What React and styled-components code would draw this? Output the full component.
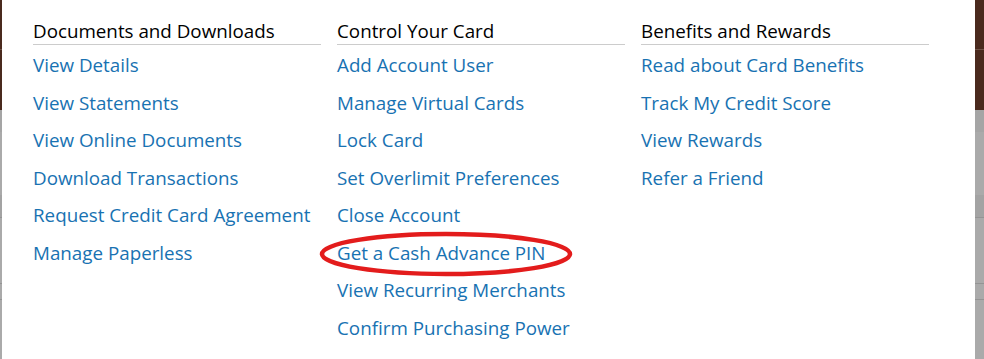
import React from 'react';
import styled, { createGlobalStyle } from 'styled-components';

const GlobalStyle = createGlobalStyle`
  html, body {
    margin: 0;
    padding: 0;
    height: 359px;
    overflow: hidden;
    background: #aaaaaa;
  }
`;

const Page = styled.div`
  position: relative;
  height: 359px;
  overflow: hidden;
  font-family: "Open Sans", "Noto Sans", sans-serif;
`;

const TopBar = styled.div`
  height: 110px;
  background: #4a2a1e;
  border-top: 49px solid #4a2a1e;
  box-sizing: border-box;
  box-shadow: inset 0 1px 0 #6e5247;
`;

const GrayBand = styled.div`
  height: ${(p) => p.h}px;
  background: ${(p) => p.bg || '#aaaaaa'};
  border-bottom: ${(p) => (p.line ? '1px solid #949494' : 'none')};
`;

const Menu = styled.div`
  position: absolute;
  top: 0;
  left: 2px;
  width: 973px;
  height: 400px;
  background: #ffffff;
  display: grid;
  grid-template-columns: repeat(3, 288px);
  column-gap: 16px;
  padding-left: 31px;
  box-sizing: border-box;
  align-content: start;
`;

const Column = styled.section`
  display: flex;
  flex-direction: column;
`;

const Heading = styled.h3`
  margin: 19px 0 2px;
  padding-bottom: 1px;
  border-bottom: 1px solid #cccccc;
  font-size: 18.8px;
  line-height: 24px;
  font-weight: 400;
  color: #000000;
`;

const LinkList = styled.ul`
  list-style: none;
  margin: 0;
  padding: 0;
`;

const Item = styled.li`
  position: relative;
  line-height: 37.5px;
  font-size: 18.8px;
  white-space: nowrap;
`;

const Link = styled.a`
  color: #1872b2;
  text-decoration: none;
`;

const Circle = styled.svg`
  position: absolute;
  left: -17px;
  top: -3px;
  width: 252px;
  height: 44px;
  overflow: visible;
  pointer-events: none;
`;

const columns = [
  {
    title: 'Documents and Downloads',
    links: [
      'View Details',
      'View Statements',
      'View Online Documents',
      'Download Transactions',
      'Request Credit Card Agreement',
      'Manage Paperless',
    ],
  },
  {
    title: 'Control Your Card',
    links: [
      'Add Account User',
      'Manage Virtual Cards',
      'Lock Card',
      'Set Overlimit Preferences',
      'Close Account',
      'Get a Cash Advance PIN',
      'View Recurring Merchants',
      'Confirm Purchasing Power',
    ],
  },
  {
    title: 'Benefits and Rewards',
    links: ['Read about Card Benefits', 'Track My Credit Score', 'View Rewards', 'Refer a Friend'],
  },
];

const highlighted = 'Get a Cash Advance PIN';

export default function App() {
  return (
    <Page>
      <GlobalStyle />
      <TopBar />
      <GrayBand h={22} bg="#a5a5a5" />
      <GrayBand h={63} />
      <GrayBand h={22} bg="#a3a3a3" line />
      <GrayBand h={65} line />
      <GrayBand h={15} line />
      <GrayBand h={60} />

      <Menu>
        {columns.map((col) => (
          <Column key={col.title}>
            <Heading>{col.title}</Heading>
            <LinkList>
              {col.links.map((label) => (
                <Item key={label}>
                  <Link href="#">{label}</Link>
                  {label === highlighted && (
                    <Circle viewBox="0 0 252 44">
                      <ellipse cx="126" cy="22" rx="124" ry="20" fill="none" stroke="#e31c1c" strokeWidth="4.5" />
                    </Circle>
                  )}
                </Item>
              ))}
            </LinkList>
          </Column>
        ))}
      </Menu>
    </Page>
  );
}
